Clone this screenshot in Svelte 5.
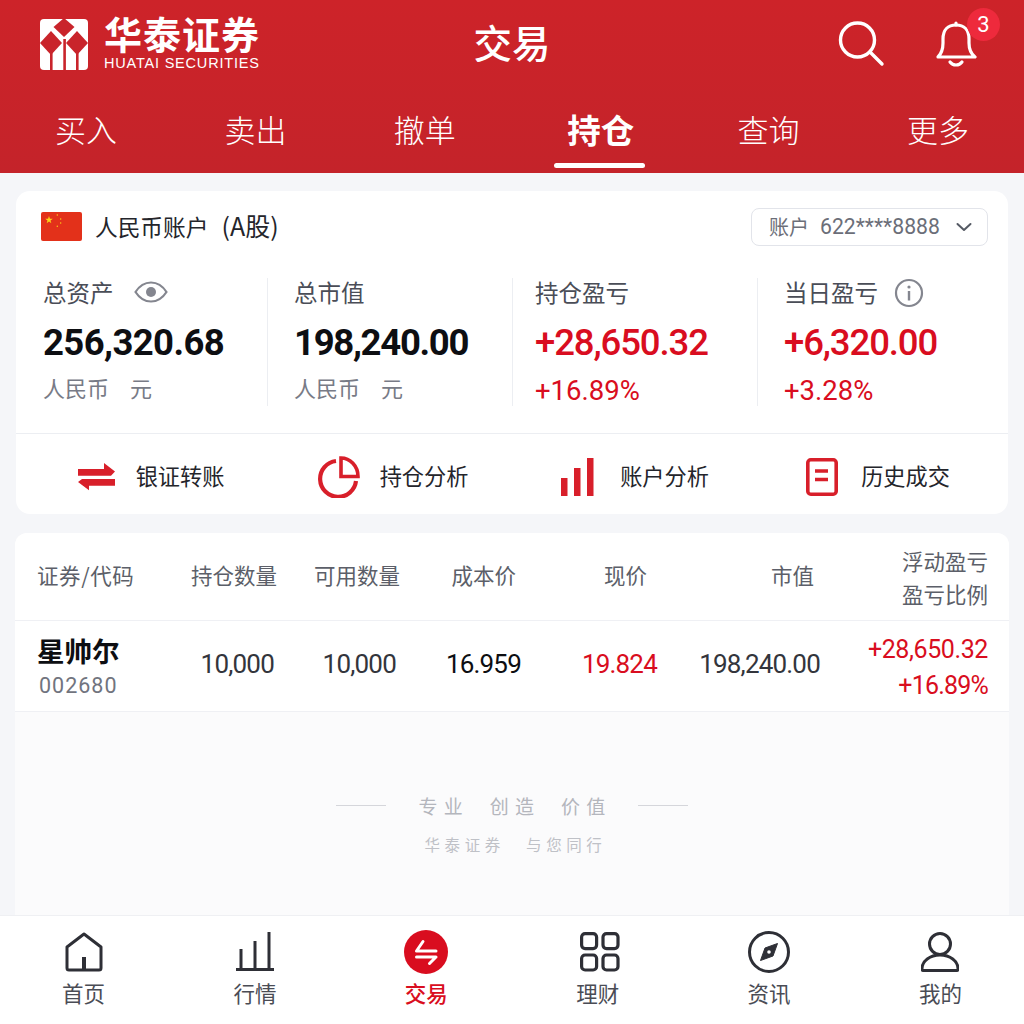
<script lang="ts">
  const tabs = ['买入', '卖出', '撤单', '持仓', '查询', '更多'];
  const activeTab = '持仓';

  const stats = [
    { key: 'assets', label: '总资产', value: '256,320.68', sub: '人民币', unit: '元', up: false },
    { key: 'market', label: '总市值', value: '198,240.00', sub: '人民币', unit: '元', up: false },
    { key: 'hold', label: '持仓盈亏', value: '+28,650.32', sub: '+16.89%', unit: '', up: true },
    { key: 'today', label: '当日盈亏', value: '+6,320.00', sub: '+3.28%', unit: '', up: true },
  ];

  const nav = ['首页', '行情', '交易', '理财', '资讯', '我的'];
</script>

<div class="page">
  <header class="top">
    <div class="top-row">
      <div class="brand">
        <svg class="logo" viewBox="0 0 48 51" width="48" height="51">
          <rect width="48" height="51" rx="4" fill="#fff" />
          <polygon points="24,-1 34.500,8 24,18 13.500,8" fill="#c9242b" />
          <polygon points="11,12 22,24 11,36 0,24" fill="#c9242b" />
          <polygon points="37,12 48,24 37,36 26,24" fill="#c9242b" />
          <path d="M10 34 h2.600 v17 h-2.600 Z M23.300 20 h2.600 v31 h-2.600 Z M36 34 h2.600 v17 h-2.600 Z" fill="#c9242b" />
        </svg>
        <div class="brand-text">
          <div class="brand-cn">华泰证券</div>
          <div class="brand-en">HUATAI SECURITIES</div>
        </div>
      </div>
      <div class="top-title">交易</div>
      <div class="top-icons">
        <svg viewBox="0 0 50 48" width="50" height="48" fill="none" stroke="#fff" stroke-width="3.400" stroke-linecap="round">
          <circle cx="22.500" cy="20" r="17" />
          <path d="M35 32 L47 44" />
        </svg>
        <div class="bell">
          <svg viewBox="0 0 44 48" width="44" height="48" fill="none" stroke="#fff" stroke-width="3.200" stroke-linecap="round" stroke-linejoin="round">
            <path d="M5 37 C9 33 10 29 10 23 V19 C10 10 15 5 23 5 C31 5 36 10 36 19 V23 C36 29 37 33 42 37 Z" />
            <path d="M23 3 V5" />
            <path d="M17 42 C20 46 26 46 29 42" />
          </svg>
          <span class="badge">3</span>
        </div>
      </div>
    </div>
    <nav class="tabs">
      {#each tabs as tab}
        <div class="tab" class:active={tab === activeTab}>{tab}</div>
      {/each}
    </nav>
  </header>

  <main class="content">
    <section class="card account">
      <div class="account-row">
        <div class="account-name">
          <svg class="flag" viewBox="0 0 41 29" width="41" height="29">
            <rect width="41" height="29" rx="2" fill="#e3311a" />
            <polygon points="8,4 8.940,6.710 11.800,6.760 9.520,8.490 10.350,11.240 8,9.600 5.650,11.240 6.480,8.490 4.200,6.760 7.060,6.710" fill="#fbd417" />
            <circle cx="16.300" cy="3" r=".7" fill="#fbd417" />
            <circle cx="19.700" cy="7" r=".7" fill="#fbd417" />
            <circle cx="19.700" cy="11" r=".7" fill="#fbd417" />
            <circle cx="16.300" cy="14.300" r=".7" fill="#fbd417" />
          </svg>
          <span class="account-title">人民币账户 <span class="account-kind">(A股)</span></span>
        </div>
        <div class="account-select">
          <span class="account-label">账户</span>
          <span class="account-no">622****8888</span>
          <svg viewBox="0 0 16 10" width="16" height="10" fill="none" stroke="#555a64" stroke-width="2" stroke-linecap="round" stroke-linejoin="round">
            <path d="M1.500 2 L8 8 L14.500 2" />
          </svg>
        </div>
      </div>

      <div class="stats">
        {#each stats as stat}
          <div class="stat stat-{stat.key}">
            <div class="stat-label">
              <span>{stat.label}</span>
              {#if stat.key === 'assets'}
                <svg class="eye" viewBox="0 0 34 24" width="34" height="24" fill="none">
                  <path d="M1.500 12 C6 5 11 2.500 17 2.500 C23 2.500 28 5 32.500 12 C28 19 23 21.500 17 21.500 C11 21.500 6 19 1.500 12 Z" stroke="#84868f" stroke-width="2.200" />
                  <circle cx="17" cy="12" r="5" fill="#84868f" />
                </svg>
              {:else if stat.key === 'today'}
                <svg class="info" viewBox="0 0 30 30" width="30" height="30" fill="none">
                  <circle cx="15" cy="15" r="13" stroke="#84868f" stroke-width="2.200" />
                  <circle cx="15" cy="9" r="1.600" fill="#84868f" />
                  <rect x="13.800" y="13" width="2.400" height="9.500" fill="#84868f" />
                </svg>
              {/if}
            </div>
            <div class="stat-value" class:up={stat.up}>{stat.value}</div>
            <div class="stat-sub" class:up={stat.up}>
              <span>{stat.sub}</span>
              {#if stat.unit}<span>{stat.unit}</span>{/if}
            </div>
          </div>
        {/each}
      </div>

      <div class="actions">
        <div class="action">
          <svg viewBox="0 0 37 28" width="37" height="28" fill="#d81f2a">
            <path d="M0 6 H26 V0 L37 8.500 L33 12.700 H0 Z" />
            <path d="M37 22.700 H11 V27.300 L0 19 L4 16 H37 Z" />
          </svg>
          <span>银证转账</span>
        </div>
        <div class="action">
          <svg viewBox="0 0 42 42" width="42" height="42" fill="none" stroke="#d81f2a">
            <path d="M18 5 A18 18 0 1 0 38 25" stroke-width="4.200" />
            <path d="M23 2 C32 2 40 10 40 20.500 H23 Z" stroke-width="3.600" />
          </svg>
          <span>持仓分析</span>
        </div>
        <div class="action">
          <svg viewBox="0 0 33 38" width="33" height="38" fill="#d81f2a">
            <rect x="0" y="20" width="6.500" height="18" />
            <rect x="13" y="10" width="6.500" height="28" />
            <rect x="26" y="0" width="6.500" height="38" />
          </svg>
          <span>账户分析</span>
        </div>
        <div class="action">
          <svg viewBox="0 0 32 38" width="32" height="38" fill="none" stroke="#d81f2a" stroke-width="3.600">
            <rect x="1.800" y="1.800" width="28.400" height="34.400" rx="3" />
            <path d="M9 13 H22 M9 21.500 H22" />
          </svg>
          <span>历史成交</span>
        </div>
      </div>
    </section>

    <section class="holdings">
      <div class="table-head">
        <div class="name-head">证券/代码</div>
        <div class="num">持仓数量</div>
        <div class="num">可用数量</div>
        <div class="num">成本价</div>
        <div class="num">现价</div>
        <div class="num">市值</div>
        <div class="num two-line">浮动盈亏<br />盈亏比例</div>
      </div>
      <div class="table-row">
        <div class="name-cell">
          <div class="stock-name">星帅尔</div>
          <div class="stock-code">002680</div>
        </div>
        <div class="num">10,000</div>
        <div class="num">10,000</div>
        <div class="num strong">16.959</div>
        <div class="num up">19.824</div>
        <div class="num">198,240.00</div>
        <div class="num up pnl">+28,650.32<br /><span class="pnl-pct">+16.89%</span></div>
      </div>
      <div class="slogan">
        <div class="slogan-main">
          <i></i>
          <span>专业&nbsp;&nbsp;创造&nbsp;&nbsp;价值</span>
          <i></i>
        </div>
        <div class="slogan-sub">华泰证券&nbsp;&nbsp;与您同行</div>
      </div>
    </section>
  </main>

  <footer class="bottom">
    {#each nav as item, i}
      <div class="nav-item" class:current={item === '交易'}>
        <div class="nav-icon" class:nudge={i === 3}>
          {#if i === 0}
            <svg viewBox="0 0 38 40" width="38" height="40" fill="none" stroke="#2e2f36" stroke-width="3" stroke-linejoin="round">
              <path d="M2 15 L19 2 L36 15 V36 Q36 38 34 38 H4 Q2 38 2 36 Z" />
              <path d="M19 25 V37" stroke-width="4" />
            </svg>
          {:else if i === 1}
            <svg viewBox="0 0 38 40" width="38" height="40" fill="none" stroke="#2e2f36" stroke-width="3">
              <path d="M0 37.500 H38 M5 38 V17 M19 38 V9 M33 38 V0" />
            </svg>
          {:else if i === 2}
            <svg viewBox="0 0 44 44" width="44" height="44">
              <circle cx="22" cy="22" r="22" fill="#d90d1f" />
              <path d="M12.500 21 H32 M12.500 21 L19 11.500 M12.500 27 H32 M32 27 L25.500 33.500" fill="none" stroke="#fff" stroke-width="3" stroke-linecap="round" stroke-linejoin="round" />
            </svg>
          {:else if i === 3}
            <svg viewBox="0 0 40 40" width="40" height="40" fill="none" stroke="#2e2f36" stroke-width="3.200">
              <rect x="1.600" y="1.600" width="15" height="15" rx="3.500" />
              <rect x="23" y="1.600" width="15" height="15" rx="3.500" />
              <rect x="1.600" y="23" width="15" height="15" rx="3.500" />
              <rect x="23" y="23" width="15" height="15" rx="3.500" />
            </svg>
          {:else if i === 4}
            <svg viewBox="0 0 42 42" width="42" height="42" fill="none">
              <circle cx="21" cy="21" r="19.500" stroke="#2e2f36" stroke-width="3" />
              <path d="M29.500 12.500 L25 25 L12.500 29.500 L17 17 Z" fill="#2e2f36" stroke="#2e2f36" stroke-width="1" stroke-linejoin="round" />
              <circle cx="21" cy="21" r="1.800" fill="#fff" />
            </svg>
          {:else}
            <svg viewBox="0 0 38 40" width="38" height="40" fill="none" stroke="#2e2f36" stroke-width="3">
              <circle cx="19" cy="12" r="10.500" />
              <path d="M2 38.500 H36 Q37 38.500 37 36.500 C37 29 29 23 19 23 C9 23 1 29 1 36.500 Q1 38.500 2 38.500 Z" />
            </svg>
          {/if}
        </div>
        <span>{item}</span>
      </div>
    {/each}
  </footer>
</div>

<style>
  :global(body) {
    margin: 0;
    background: #f5f6f9;
  }

  .page {
    width: 1024px;
    height: 1024px;
    overflow: hidden;
    display: flex;
    flex-direction: column;
    font-family: "Noto Sans CJK SC", "Roboto", sans-serif;
    color: #1a1b20;
  }

  /* Red header */
  .top {
    height: 173px;
    background: linear-gradient(180deg, #cd2329 0%, #c4232a 100%);
    color: #fff;
    flex-shrink: 0;
  }

  .top-row {
    height: 88px;
    display: grid;
    grid-template-columns: 1fr auto 1fr;
    align-items: center;
    padding: 0 40px;
  }

  .brand {
    display: flex;
    align-items: center;
    gap: 16px;
  }

  .brand-text {
    display: flex;
    flex-direction: column;
  }

  .brand-cn {
    font-size: 38px;
    font-weight: 700;
    line-height: 38px;
    letter-spacing: 1px;
    margin-top: -2px;
  }

  .brand-en {
    font-family: "Liberation Sans", sans-serif;
    font-size: 14.500px;
    line-height: 18px;
    letter-spacing: 0.8px;
    margin-top: 2px;
  }

  .top-title {
    font-size: 38.500px;
    line-height: 44px;
    font-weight: 500;
    margin-bottom: 6px;
  }

  .top-icons {
    display: flex;
    justify-content: flex-end;
    align-items: center;
    gap: 48px;
    padding-right: 7px;
  }

  .bell {
    position: relative;
    height: 48px;
  }

  .badge {
    position: absolute;
    top: -12px;
    right: -23px;
    width: 33px;
    height: 33px;
    border-radius: 50%;
    background: #ee2a3c;
    font: 22px/33px "Roboto", sans-serif;
    text-align: center;
  }

  .tabs {
    display: flex;
    justify-content: space-between;
    padding: 19px 55px 0;
  }

  .tab {
    position: relative;
    font-size: 31px;
    line-height: 44px;
    font-weight: 300;
  }

  .tab.active {
    font-size: 33.500px;
    font-weight: 700;
    margin-left: 4px;
    margin-right: -4px;
  }

  .tab.active::after {
    content: '';
    position: absolute;
    left: -13px;
    right: -11px;
    top: 56px;
    height: 5px;
    border-radius: 3px;
    background: #fff;
  }

  /* Body */
  .content {
    flex: 1;
    min-height: 0;
    display: flex;
    flex-direction: column;
    padding: 18px 15px 0;
    gap: 19px;
  }

  .card {
    background: #fff;
    border-radius: 14px;
    margin: 0 1px;
  }

  .account-row {
    height: 70px;
    display: flex;
    justify-content: space-between;
    align-items: center;
    padding: 0 20px 0 25px;
  }

  .account-name {
    display: flex;
    align-items: center;
    gap: 13px;
    font-size: 22.700px;
    color: #24252b;
  }

  .account-title {
    padding-bottom: 3px;
  }

  .account-kind {
    font-size: 25px;
    margin-left: 8px;
  }

  .account-select {
    display: flex;
    align-items: center;
    width: 237px;
    height: 38px;
    box-sizing: border-box;
    padding: 0 15px 0 17px;
    margin-top: 1px;
    border: 1px solid #e2e4ea;
    border-radius: 8px;
    font-size: 20px;
    color: #6b6e78;
  }

  .account-no {
    font-family: "Roboto", sans-serif;
    font-size: 21.200px;
    margin-left: 11px;
    flex: 1;
  }

  .stats {
    display: grid;
    grid-template-columns: 251px 245px 245px 251px;
    height: 128px;
    margin-top: 17px;
  }

  .stat {
    padding-left: 26px;
    border-left: 1px solid #eceef2;
  }

  .stat:first-child {
    border-left: none;
    padding-left: 27px;
  }

  .stat-hold {
    padding-left: 22px;
  }

  .stat-label {
    display: flex;
    align-items: center;
    height: 30px;
    gap: 16px;
    font-size: 23.500px;
    color: #4a4d57;
    margin-top: -1px;
  }

  .eye {
    margin-left: 4px;
  }

  .info {
    margin-top: 2px;
  }

  .stat-value {
    font-family: "Roboto", sans-serif;
    font-size: 36.500px;
    font-weight: 500;
    line-height: 44px;
    margin-top: 14px;
    color: #0d0e12;
  }

  .stat-assets .stat-value {
    letter-spacing: -0.6px;
    font-weight: 700;
  }

  .stat-market .stat-value {
    letter-spacing: -1.300px;
    font-weight: 700;
  }

  .stat-hold .stat-value {
    letter-spacing: -1.100px;
  }

  .stat-today .stat-value {
    letter-spacing: -1.100px;
  }

  .stat-sub {
    display: flex;
    gap: 21px;
    font-size: 22px;
    line-height: 30px;
    margin-top: 7px;
    color: #787b86;
  }

  .stat-value.up,
  .stat-sub.up {
    color: #d90d20;
  }

  .stat-sub.up {
    font-family: "Roboto", sans-serif;
    font-size: 27.500px;
    margin-top: 11px;
  }

  .actions {
    height: 75px;
    padding: 5px 0 0 4px;
    margin-top: 27px;
    border-top: 1px solid #eceef2;
    display: grid;
    grid-template-columns: repeat(4, 242px);
    justify-content: center;
  }

  .action {
    display: flex;
    align-items: center;
    justify-content: center;
    gap: 21px;
    font-size: 22.200px;
    color: #24252b;
  }

  .action span {
    padding-bottom: 4px;
  }

  .action:nth-child(2) {
    gap: 20px;
  }

  .action:nth-child(3) {
    gap: 26px;
  }

  .action:nth-child(4) {
    gap: 23px;
    padding-left: 2px;
  }

  /* Holdings */
  .holdings {
    flex: 1;
    display: flex;
    flex-direction: column;
    background: #fbfbfc;
    border-radius: 12px 12px 0 0;
  }

  .table-head,
  .table-row {
    display: grid;
    background: #fff;
    align-items: center;
    padding-left: 22px;
    padding-right: 21px;
  }

  .table-head {
    height: 87px;
    border-radius: 12px 12px 0 0;
    grid-template-columns: 132px 108px 123px 116px 131px 167px 174px;
    font-size: 21.500px;
    color: #5c5f69;
    border-bottom: 1px solid #eff0f4;
  }

  .table-head > div {
    padding-bottom: 4px;
  }

  .table-head > .name-head {
    letter-spacing: 0.6px;
  }

  .table-head > .two-line {
    padding-bottom: 0;
    line-height: 33px;
  }

  .table-row {
    height: 90px;
    grid-template-columns: 132px 105px 122px 125px 136px 163px 168px;
    font-family: "Roboto", sans-serif;
    font-size: 26px;
    color: #33353c;
    border-bottom: 1px solid #eff0f4;
  }

  .table-row > .num {
    padding-bottom: 4px;
    letter-spacing: -0.800px;
  }

  .table-row > .pnl {
    padding-bottom: 0;
    padding-top: 3px;
    font-size: 25px;
    line-height: 36px;
    letter-spacing: -0.400px;
  }

  .pnl-pct {
    letter-spacing: -0.800px;
  }

  .num {
    text-align: right;
  }

  .strong {
    color: #0d0e12;
  }

  .up {
    color: #d90d20;
  }

  .name-cell {
    padding-top: 4px;
  }

  .stock-name {
    font-family: "Noto Sans CJK SC", sans-serif;
    font-size: 27.500px;
    font-weight: 700;
    line-height: 36px;
    color: #0d0e12;
  }

  .stock-code {
    font-size: 21.500px;
    line-height: 36px;
    letter-spacing: 1px;
    margin-left: 2px;
    color: #71747e;
  }

  .slogan {
    display: flex;
    flex-direction: column;
    align-items: center;
    padding-top: 80px;
  }

  .slogan-main {
    display: flex;
    align-items: center;
    gap: 32px;
    font-size: 19px;
    letter-spacing: 6.200px;
    color: #b4b6bd;
  }

  .slogan-main span {
    margin-right: -6px;
  }

  .slogan-main i {
    width: 50px;
    height: 1px;
    background: #d5d6db;
  }

  .slogan-sub {
    font-size: 15.500px;
    letter-spacing: 4.600px;
    word-spacing: 2.500px;
    padding-left: 7px;
    margin-top: 14px;
    color: #bfc1c7;
  }

  /* Bottom nav */
  .bottom {
    height: 109px;
    flex-shrink: 0;
    background: #fff;
    border-top: 1px solid #eff0f3;
    box-sizing: border-box;
    display: grid;
    grid-template-columns: repeat(6, 171.400px);
    justify-content: center;
  }

  .nav-item {
    display: flex;
    flex-direction: column;
    align-items: center;
    font-size: 21.500px;
    color: #4a4c55;
  }

  .nav-icon {
    height: 44px;
    margin-top: 14px;
    margin-bottom: 3px;
    display: flex;
    align-items: center;
  }

  .nav-icon.nudge {
    margin-left: 4px;
  }

  .nav-item.current {
    color: #d90d20;
    font-weight: 500;
  }
</style>
